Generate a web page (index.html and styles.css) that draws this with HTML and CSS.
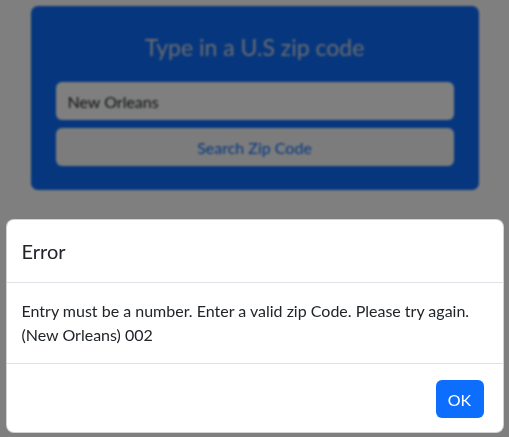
FILE: index.html
```
<!DOCTYPE html>
<html lang="en">
<head>
<meta charset="utf-8">
<title>Zip Code Search</title>
<link rel="stylesheet" href="styles.css">
</head>
<body>
<main class="page">
  <section class="card">
    <h2 class="card-title">Type in a U.S zip code</h2>
    <div class="field">New Orleans</div>
    <button class="search-btn" type="button">Search Zip Code</button>
  </section>
</main>
<div class="backdrop"></div>
<div class="modal-wrap">
  <div class="modal">
    <div class="modal-header">
      <h5 class="modal-title">Error</h5>
    </div>
    <div class="modal-body">Entry must be a number. Enter a valid zip Code. Please try again.<br>(New Orleans) 002</div>
    <div class="modal-footer">
      <button class="ok-btn" type="button">OK</button>
    </div>
  </div>
</div>
</body>
</html>
```

FILE: styles.css
```
* { box-sizing: border-box; }
html, body { margin: 0; padding: 0; }
body {
  background: #ffffff;
  font-family: Lato, "Open Sans", sans-serif;
  color: #212529;
  width: 509px;
  height: 437px;
  overflow: hidden;
}
.page {
  display: flex;
  justify-content: center;
  padding-top: 6px;
  filter: blur(0.8px);
}
.card {
  width: 448px;
  background: #0d6efd;
  border-radius: 7px;
  padding: 27px 25px 24px;
  display: flex;
  flex-direction: column;
}
.card-title {
  margin: 0 0 20px;
  text-align: center;
  color: #d2d6de;
  font-size: 23px;
  font-weight: 400;
  line-height: 29px;
}
.field {
  height: 38px;
  background: #ffffff;
  border-radius: 6px;
  padding: 0 12px;
  display: flex;
  align-items: center;
  font-size: 16px;
  color: #212529;
}
.search-btn {
  margin-top: 8px;
  height: 38px;
  border: 0;
  background: #f8f9fa;
  border-radius: 6px;
  color: #0d6efd;
  font-family: inherit;
  font-size: 16px;
}
.backdrop {
  position: fixed;
  inset: 0;
  background: rgba(0, 0, 0, 0.5);
}
.modal-wrap {
  position: fixed;
  inset: 0;
  display: flex;
  justify-content: center;
  padding-top: 219px;
}
.modal {
  width: 498px;
  height: 214px;
  background: #ffffff;
  border: 1px solid rgba(0, 0, 0, 0.175);
  border-radius: 8px;
  display: flex;
  flex-direction: column;
}
.modal-header {
  padding: 16px 16px 16px 15px;
  border-bottom: 1px solid #dee2e6;
}
.modal-title {
  margin: 0;
  font-size: 20px;
  font-weight: 400;
  line-height: 30px;
}
.modal-body {
  padding: 16px 16px 16px 15px;
  font-size: 16px;
  line-height: 24px;
}
.modal-footer {
  border-top: 1px solid #dee2e6;
  padding: 12px;
  display: flex;
  justify-content: flex-end;
}
.ok-btn {
  margin: 4px 7px 4px 4px;
  height: 38px;
  width: 48px;
  border: 0;
  border-radius: 6px;
  background: #0d6efd;
  color: #ffffff;
  font-family: inherit;
  font-size: 16px;
}
```
